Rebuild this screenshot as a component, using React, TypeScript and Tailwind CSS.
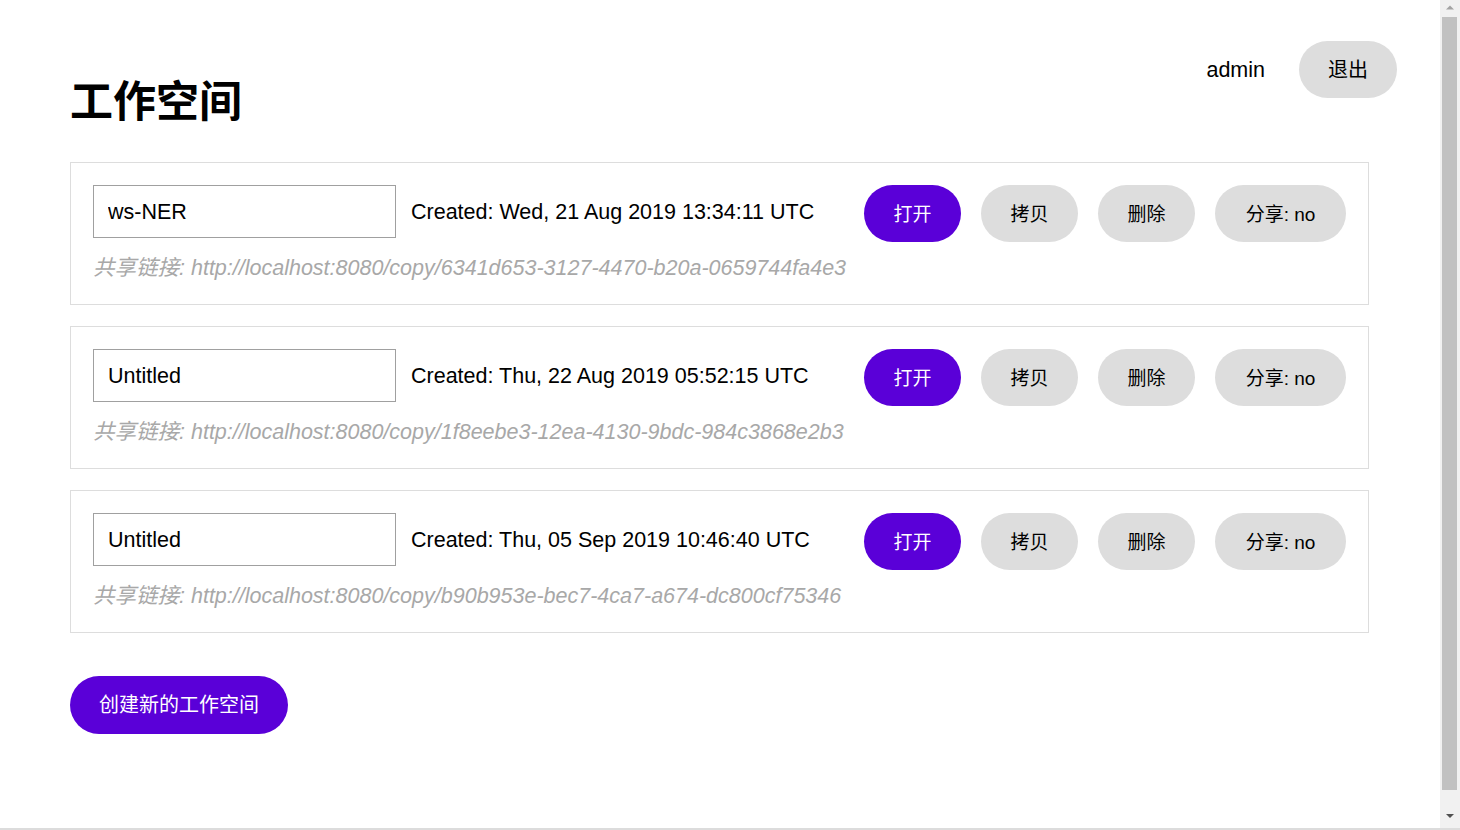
import React from 'react';

interface Workspace {
  name: string;
  created: string;
  link: string;
}

const WORKSPACES: Workspace[] = [
  {
    name: 'ws-NER',
    created: 'Wed, 21 Aug 2019 13:34:11 UTC',
    link: 'http://localhost:8080/copy/6341d653-3127-4470-b20a-0659744fa4e3',
  },
  {
    name: 'Untitled',
    created: 'Thu, 22 Aug 2019 05:52:15 UTC',
    link: 'http://localhost:8080/copy/1f8eebe3-12ea-4130-9bdc-984c3868e2b3',
  },
  {
    name: 'Untitled',
    created: 'Thu, 05 Sep 2019 10:46:40 UTC',
    link: 'http://localhost:8080/copy/b90b953e-bec7-4ca7-a674-dc800cf75346',
  },
];

const FONT = "font-['Liberation_Sans','Noto_Sans_CJK_SC',sans-serif]";

function PillButton({ label, primary, wide }: { label: string; primary?: boolean; wide?: boolean }) {
  return (
    <button
      className={
        primary
          ? 'h-[57px] w-[97px] pt-[3px] rounded-full bg-[#5a00d8] text-white text-[19px] flex items-center justify-center'
          : wide
            ? 'h-[57px] w-[131px] pt-[3px] rounded-full bg-[#dddddd] text-black text-[19px] flex items-center justify-center'
            : 'h-[57px] w-[97px] pt-[3px] rounded-full bg-[#dddddd] text-black text-[19px] flex items-center justify-center'
      }
    >
      {label}
    </button>
  );
}

function WorkspaceCard({ ws }: { ws: Workspace }) {
  return (
    <div className="border border-[#dddddd] px-[22px] pt-[22px] pb-[24px]">
      <div className="flex items-start">
        <input
          defaultValue={ws.name}
          className="w-[303px] h-[53px] border border-[#a0a0a0] px-[14px] pt-[1px] text-[21.5px] text-black outline-none"
        />
        <span className="ml-[15px] pt-[1px] leading-[52px] text-[21.5px] text-black">Created: {ws.created}</span>
        <div className="ml-auto flex gap-[20px]">
          <PillButton label="打开" primary />
          <PillButton label="拷贝" />
          <PillButton label="删除" />
          <PillButton label="分享: no" wide />
        </div>
      </div>
      <div className="mt-[14px] text-[21.5px] leading-[24px] italic text-[#a8a8a8]">
        共享链接: {ws.link}
      </div>
    </div>
  );
}

function Scrollbar() {
  return (
    <div className="w-[20px] shrink-0 bg-[#f1f1f1] flex flex-col items-center">
      <svg width="10" height="17" viewBox="0 0 10 17" className="shrink-0">
        <path d="M1 9.5 L5 5.5 L9 9.5 Z" fill="#a3a3a3" />
      </svg>
      <div className="ml-[-1px] w-[15px] flex-1 bg-[#c1c1c1]" />
      <svg width="10" height="38" viewBox="0 0 10 38" className="shrink-0">
        <path d="M1 24 L5 28 L9 24 Z" fill="#505050" />
      </svg>
    </div>
  );
}

export default function App() {
  return (
    <div className={`${FONT} h-[830px] overflow-hidden bg-white text-black flex flex-col`}>
      <div className="flex flex-1 min-h-0">
        <div className="flex-1 min-w-0">
          <header className="flex items-start justify-between pt-[41px] pl-[70px] pr-[43px]">
            <h1 className="mt-[35px] text-[43px] leading-[52px] font-bold">工作空间</h1>
            <div className="flex items-center gap-[34px]">
              <span className="pt-[1px] text-[21.5px]">admin</span>
              <button className="h-[57px] w-[98px] rounded-full bg-[#dddddd] text-[20px] text-black">退出</button>
            </div>
          </header>
          <main className="pl-[70px] pr-[71px] pt-[34px]">
            <div className="flex flex-col gap-[21px]">
              {WORKSPACES.map((ws, i) => (
                <WorkspaceCard key={i} ws={ws} />
              ))}
            </div>
            <button className="mt-[43px] h-[58px] w-[218px] rounded-full bg-[#5a00d8] text-white text-[20px]">
              创建新的工作空间
            </button>
          </main>
        </div>
        <Scrollbar />
      </div>
      <div className="h-[2px] shrink-0 bg-[#dcdcdc]" />
    </div>
  );
}
